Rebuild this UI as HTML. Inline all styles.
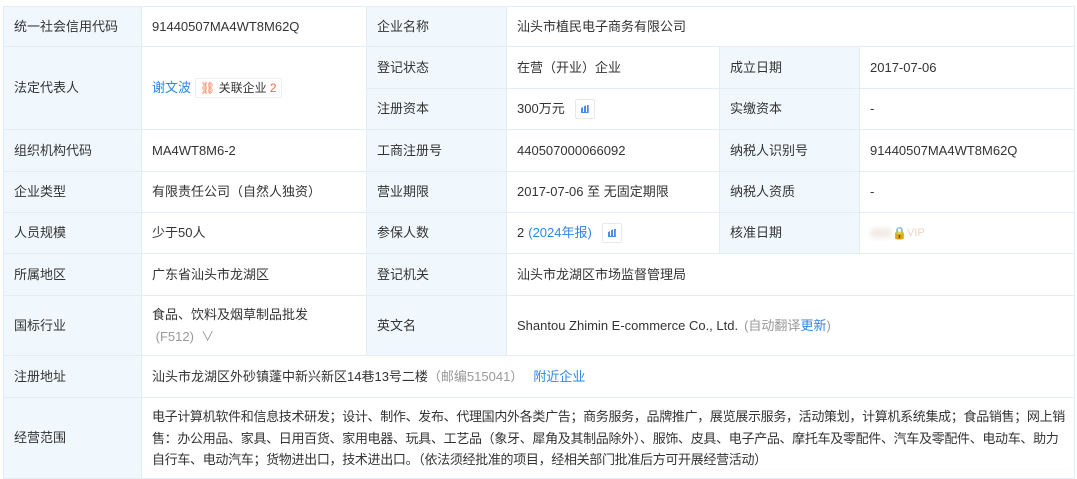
<!DOCTYPE html><html><head><meta charset="utf-8"><style>
body{margin:0;width:1077px;height:479px;background:#fff;overflow:hidden;font-family:"Liberation Sans","Noto Sans CJK SC",sans-serif;font-size:13px;color:#333}
.c{position:absolute;box-sizing:border-box;border:1px solid #e4ecf4;margin:-1px 0 0 -1px;display:flex;align-items:center;padding:0 10px;line-height:22px}
.l{background:#f1f8fd}
.b{color:#2e86e6}
.g{color:#999}
.ic{display:inline-block;width:18px;height:18px;border:1px solid #e8e8e8;border-radius:2px;margin-left:10px;vertical-align:middle;position:relative}
.ic:after{content:"";position:absolute;left:5px;top:5px;width:8px;height:7px;border-bottom:1.5px solid #4a8ae8;background:linear-gradient(90deg,#4a8ae8 0 2px,transparent 2px 3px,#4a8ae8 3px 5px,transparent 5px 6px,#4a8ae8 6px 8px);clip-path:polygon(0 40%,35% 20%,70% 0,100% 0,100% 100%,0 100%)}
</style></head><body>
<div class="c l" style="left:4px;top:7px;width:139px;height:41px">统一社会信用代码</div>
<div class="c" style="left:142px;top:7px;width:226px;height:41px">91440507MA4WT8M62Q</div>
<div class="c l" style="left:367px;top:7px;width:141px;height:41px">企业名称</div>
<div class="c" style="left:507px;top:7px;width:569px;height:41px">汕头市植民电子商务有限公司</div>

<div class="c l" style="left:4px;top:47px;width:139px;height:84px">法定代表人</div>
<div class="c" style="left:142px;top:47px;width:226px;height:84px"><span class="b">谢文波</span><span style="margin-left:4px;border:1px solid #eee;border-radius:2px;padding:0 4px;font-size:12px;line-height:18px"><span style="color:#f06a3c">⛓</span> 关联企业 <span style="color:#f06a3c">2</span></span></div>
<div class="c l" style="left:367px;top:47px;width:141px;height:43px">登记状态</div>
<div class="c" style="left:507px;top:47px;width:214px;height:43px">在营（开业）企业</div>
<div class="c l" style="left:720px;top:47px;width:141px;height:43px">成立日期</div>
<div class="c" style="left:860px;top:47px;width:216px;height:43px">2017-07-06</div>
<div class="c l" style="left:367px;top:89px;width:141px;height:42px">注册资本</div>
<div class="c" style="left:507px;top:89px;width:214px;height:42px">300万元<span class="ic"></span></div>
<div class="c l" style="left:720px;top:89px;width:141px;height:42px">实缴资本</div>
<div class="c" style="left:860px;top:89px;width:216px;height:42px">-</div>

<div class="c l" style="left:4px;top:130px;width:139px;height:43px">组织机构代码</div>
<div class="c" style="left:142px;top:130px;width:226px;height:43px">MA4WT8M6-2</div>
<div class="c l" style="left:367px;top:130px;width:141px;height:43px">工商注册号</div>
<div class="c" style="left:507px;top:130px;width:214px;height:43px">440507000066092</div>
<div class="c l" style="left:720px;top:130px;width:141px;height:43px">纳税人识别号</div>
<div class="c" style="left:860px;top:130px;width:216px;height:43px">91440507MA4WT8M62Q</div>

<div class="c l" style="left:4px;top:172px;width:139px;height:42px">企业类型</div>
<div class="c" style="left:142px;top:172px;width:226px;height:42px">有限责任公司（自然人独资）</div>
<div class="c l" style="left:367px;top:172px;width:141px;height:42px">营业期限</div>
<div class="c" style="left:507px;top:172px;width:214px;height:42px">2017-07-06 至 无固定期限</div>
<div class="c l" style="left:720px;top:172px;width:141px;height:42px">纳税人资质</div>
<div class="c" style="left:860px;top:172px;width:216px;height:42px">-</div>

<div class="c l" style="left:4px;top:213px;width:139px;height:42px">人员规模</div>
<div class="c" style="left:142px;top:213px;width:226px;height:42px">少于50人</div>
<div class="c l" style="left:367px;top:213px;width:141px;height:42px">参保人数</div>
<div class="c" style="left:507px;top:213px;width:214px;height:42px">2 <span class="b" style="margin-left:4px">(2024年报)</span><span class="ic"></span></div>
<div class="c l" style="left:720px;top:213px;width:141px;height:42px">核准日期</div>
<div class="c" style="left:860px;top:213px;width:216px;height:42px"><span style="display:inline-block;width:22px;height:10px;background:#f3ece6;border-radius:5px;filter:blur(2px)"></span><span style="color:#b87a4a;font-size:12px">🔒</span><span style="color:#e8d6c8;font-size:11px">VIP</span></div>

<div class="c l" style="left:4px;top:254px;width:139px;height:43px">所属地区</div>
<div class="c" style="left:142px;top:254px;width:226px;height:43px">广东省汕头市龙湖区</div>
<div class="c l" style="left:367px;top:254px;width:141px;height:43px">登记机关</div>
<div class="c" style="left:507px;top:254px;width:569px;height:43px">汕头市龙湖区市场监督管理局</div>

<div class="c l" style="left:4px;top:296px;width:139px;height:61px">国标行业</div>
<div class="c" style="left:142px;top:296px;width:226px;height:61px;display:block;padding-top:8px">食品、饮料及烟草制品批发<br><span class="g">&nbsp;(F512)&nbsp; ∨</span></div>
<div class="c l" style="left:367px;top:296px;width:141px;height:61px">英文名</div>
<div class="c" style="left:507px;top:296px;width:569px;height:61px">Shantou Zhimin E-commerce Co., Ltd.<span class="g" style="margin-left:6px">(自动翻译</span><span class="b">更新</span><span class="g">)</span></div>

<div class="c l" style="left:4px;top:356px;width:139px;height:43px">注册地址</div>
<div class="c" style="left:142px;top:356px;width:934px;height:43px">汕头市龙湖区外砂镇蓬中新兴新区14巷13号二楼<span class="g">（邮编515041）</span><span class="b" style="margin-left:10px">附近企业</span></div>

<div class="c l" style="left:4px;top:398px;width:139px;height:82px">经营范围</div>
<div class="c" style="left:142px;top:398px;width:934px;height:82px;display:block;padding:8px 2px 0 10px;letter-spacing:-0.32px;line-height:21.5px;white-space:nowrap;overflow:hidden">电子计算机软件和信息技术研发；设计、制作、发布、代理国内外各类广告；商务服务，品牌推广，展览展示服务，活动策划，计算机系统集成；食品销售；网上销<br>售：办公用品、家具、日用百货、家用电器、玩具、工艺品（象牙、犀角及其制品除外）、服饰、皮具、电子产品、摩托车及零配件、汽车及零配件、电动车、助力<br>自行车、电动汽车；货物进出口，技术进出口。（依法须经批准的项目，经相关部门批准后方可开展经营活动）</div>
</body></html>
